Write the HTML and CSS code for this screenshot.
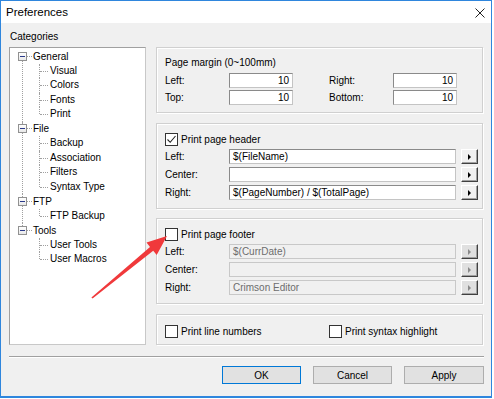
FILE: index.html
```html
<!DOCTYPE html>
<html lang="en">
<head>
  <meta charset="UTF-8" />
  <title>Preferences</title>
  <link rel="stylesheet" href="styles.css">
</head>
<body>
  <div class="window">
    <div class="titlebar">
      <span class="title">Preferences</span>
      <svg class="close" width="10" height="10" viewBox="0 0 10 10">
        <path d="M0.5 0.5 L9.5 9.5 M9.5 0.5 L0.5 9.5" stroke="#222" stroke-width="1" fill="none"/>
      </svg>
    </div>

    <div class="dialog">
      <div class="main">
        <div class="categories">
          <div class="cat-label">Categories</div>
          <div class="tree-box">
            <ul class="tree">
              <li>
                <div class="row"><span class="toggle"></span>General</div>
                <ul class="sub">
                  <li>Visual</li>
                  <li>Colors</li>
                  <li>Fonts</li>
                  <li>Print</li>
                </ul>
              </li>
              <li>
                <div class="row"><span class="toggle"></span>File</div>
                <ul class="sub">
                  <li>Backup</li>
                  <li>Association</li>
                  <li>Filters</li>
                  <li>Syntax Type</li>
                </ul>
              </li>
              <li>
                <div class="row"><span class="toggle"></span>FTP</div>
                <ul class="sub">
                  <li>FTP Backup</li>
                </ul>
              </li>
              <li>
                <div class="row"><span class="toggle"></span>Tools</div>
                <ul class="sub">
                  <li>User Tools</li>
                  <li>User Macros</li>
                </ul>
              </li>
            </ul>
          </div>
        </div>

        <div class="options">
          <div class="group margin-group">
            <div class="group-title">Page margin (0~100mm)</div>
            <div class="margin-grid">
              <span class="lbl">Left:</span>
              <span class="field num">10</span>
              <span></span>
              <span class="lbl">Right:</span>
              <span class="field num">10</span>
              <span class="lbl">Top:</span>
              <span class="field num">10</span>
              <span></span>
              <span class="lbl">Bottom:</span>
              <span class="field num">10</span>
            </div>
          </div>

          <div class="group text-group">
            <label class="check"><span class="box checked">
              <svg width="11" height="11" viewBox="0 0 11 11"><path d="M1.5 5.5 L4.2 8.3 L9.5 2" stroke="#222" stroke-width="1.1" fill="none"/></svg>
            </span>Print page header</label>
            <div class="field-rows">
              <div class="field-row"><span class="lbl">Left:</span><span class="field">$(FileName)</span><span class="pick"></span></div>
              <div class="field-row"><span class="lbl">Center:</span><span class="field"></span><span class="pick"></span></div>
              <div class="field-row"><span class="lbl">Right:</span><span class="field">$(PageNumber) / $(TotalPage)</span><span class="pick"></span></div>
            </div>
          </div>

          <div class="group text-group">
            <label class="check"><span class="box"></span>Print page footer</label>
            <div class="field-rows disabled">
              <div class="field-row"><span class="lbl">Left:</span><span class="field">$(CurrDate)</span><span class="pick"></span></div>
              <div class="field-row"><span class="lbl">Center:</span><span class="field"></span><span class="pick"></span></div>
              <div class="field-row"><span class="lbl">Right:</span><span class="field">Crimson Editor</span><span class="pick"></span></div>
            </div>
          </div>

          <div class="group flags-group">
            <label class="check wide"><span class="box"></span>Print line numbers</label>
            <label class="check"><span class="box"></span>Print syntax highlight</label>
          </div>
        </div>
      </div>

      <div class="separator"></div>

      <div class="buttons">
        <button class="btn default">OK</button>
        <button class="btn">Cancel</button>
        <button class="btn">Apply</button>
      </div>
    </div>

    <!-- annotation arrow drawn over the dialog -->
    <svg class="pointer" width="494" height="399" viewBox="0 0 494 399">
      <polygon points="167,236 156.7,255 153.2,250.7 92.6,298.6 91.4,297.4 150,246.9 146.5,242.6" fill="#f0393b"/>
    </svg>
  </div>
</body>
</html>
```

FILE: styles.css
```css
body {
  margin: 0;
  background: #fff;
  font-family: "Liberation Sans", Arial, sans-serif;
  font-size: 10px;
  color: #000;
}

.window {
  position: relative;
  width: 492px;
  height: 398px;
  box-sizing: border-box;
  border: 1px solid #2f86dd;
  border-bottom-width: 2px;
  background: #f0f0f0;
}

.titlebar {
  height: 22px;
  background: #fff;
  display: flex;
  align-items: center;
  justify-content: space-between;
  padding: 0 6px 0 5px;
}
.title {
  font-size: 11.5px;
}
.close {
  margin-top: 1px;
}

.dialog {
  padding: 8px 7px 0 8px;
}

.main {
  display: flex;
  gap: 10px;
}

.categories {
  width: 137px;
}
.cat-label {
  line-height: 12px;
  padding-left: 1px;
}
.tree-box {
  margin-top: 4px;
  height: 298px;
  box-sizing: border-box;
  border: 1px solid #a0a0a0;
  border-right-color: #c8c8c8;
  border-bottom-color: #c8c8c8;
  background: #fff;
}

.tree, .sub {
  list-style: none;
  margin: 0;
  padding: 0;
}
.tree {
  padding-top: 1px;
}
.tree > li {
  position: relative;
}
.tree > li::before {
  content: "";
  position: absolute;
  left: 12px;
  top: 0;
  bottom: 0;
  border-left: 1px dotted #a0a0a0;
}
.tree > li:first-child::before {
  top: 7px;
}
.tree > li:last-child::before {
  bottom: auto;
  height: 7px;
}
.row {
  display: flex;
  align-items: center;
  height: 14.5px;
  padding-left: 8px;
}
.toggle {
  position: relative;
  z-index: 1;
  width: 9px;
  height: 9px;
  box-sizing: border-box;
  border: 1px solid #919191;
  background: linear-gradient(#fff, #e8e8e8);
  margin-right: 6px;
}
.toggle::before {
  content: "";
  position: absolute;
  left: 1px;
  top: 3px;
  width: 5px;
  height: 1px;
  background: #2b3a8a;
}
.toggle::after {
  content: "";
  position: absolute;
  left: 8px;
  top: 3px;
  width: 5px;
  border-top: 1px dotted #a0a0a0;
}

.sub {
  padding-left: 40px;
}
.sub li {
  position: relative;
  height: 14.5px;
  line-height: 14.5px;
}
.sub li::before {
  content: "";
  position: absolute;
  left: -10px;
  top: 7px;
  width: 8px;
  border-top: 1px dotted #a0a0a0;
}
.sub li::after {
  content: "";
  position: absolute;
  left: -11px;
  top: 0;
  height: 100%;
  border-left: 1px dotted #a0a0a0;
}
.sub li:last-child::after {
  height: 7px;
}

.options {
  width: 327px;
  padding-top: 16px;
}

.group {
  box-sizing: border-box;
  border: 1px solid #d0d0d0;
  box-shadow: inset 1px 1px #fff, 1px 1px #fff;
  padding: 9px 8px 0 8px;
}
.margin-group {
  height: 66px;
}
.text-group {
  height: 86px;
  margin-top: 10px;
}
.text-group + .text-group {
  margin-top: 9px;
}
.flags-group {
  height: 31px;
  margin-top: 10px;
  padding-top: 10px;
  display: flex;
}

.group-title {
  line-height: 12px;
}
.margin-grid {
  display: grid;
  grid-template-columns: 64px 64px 36px 64px 64px;
  grid-auto-rows: 15px;
  row-gap: 2px;
  margin-top: 4px;
}
.lbl {
  line-height: 15px;
}

.field {
  box-sizing: border-box;
  height: 15px;
  line-height: 13px;
  padding: 0 3px;
  background: #fff;
  border: 1px solid #8a8a8a;
  border-right-color: #c4c4c4;
  border-bottom-color: #c4c4c4;
  white-space: nowrap;
  overflow: hidden;
}
.num {
  text-align: right;
}

.check {
  display: flex;
  align-items: center;
  height: 13px;
}
.check.wide {
  width: 164px;
}
.box {
  width: 13px;
  height: 13px;
  box-sizing: border-box;
  border: 1px solid #333;
  background: #fff;
  margin-right: 3px;
  display: flex;
  align-items: center;
  justify-content: center;
}

.field-rows {
  display: flex;
  flex-direction: column;
  gap: 3px;
  margin-top: 3px;
}
.field-row {
  display: grid;
  grid-template-columns: 64px 227px 17px;
  column-gap: 0;
}
.field-row .pick {
  margin-left: 5px;
  width: 17px;
}
.pick {
  position: relative;
  box-sizing: border-box;
  height: 15px;
  background: #f0f0f0;
  border: 1px solid;
  border-color: #fff #404040 #404040 #fff;
  box-shadow: inset -1px -1px #a0a0a0;
}
.pick::after {
  content: "";
  position: absolute;
  left: 6px;
  top: 4px;
  border-left: 3px solid #000;
  border-top: 3px solid transparent;
  border-bottom: 3px solid transparent;
}

.disabled .field {
  background: #f0f0f0;
  border-color: #c8c8c8;
  color: #6d6d6d;
}
.disabled .pick {
  background: #e0e0e0;
}
.disabled .pick::after {
  border-left-color: #8a8a8a;
}

.separator {
  margin-top: 11px;
  margin-right: 0;
  height: 0;
  border-top: 1px solid #a0a0a0;
  border-bottom: 1px solid #fff;
}

.buttons {
  display: flex;
  justify-content: flex-end;
  gap: 12px;
  margin-top: 8px;
}
.btn {
  width: 79px;
  height: 18px;
  padding: 0;
  font-family: inherit;
  font-size: 10px;
  background: #e1e1e1;
  border: 1px solid #adadad;
  color: #000;
}
.btn:last-child {
  width: 80px;
}
.btn.default {
  border-color: #0078d7;
}

.pointer {
  position: absolute;
  left: -1px;
  top: -1px;
  pointer-events: none;
}
```
